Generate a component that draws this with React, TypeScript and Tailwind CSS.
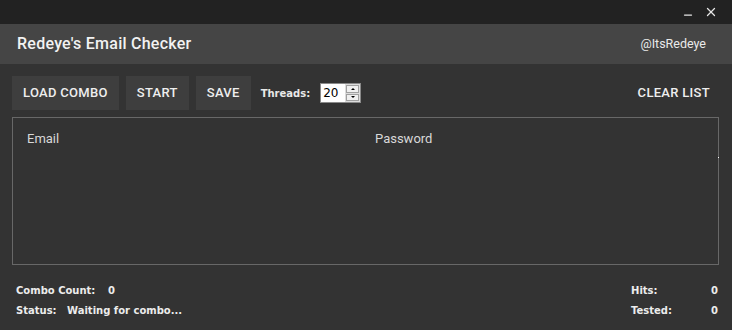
import { Minus, X } from 'lucide-react';

const roboto = { fontFamily: 'Roboto, "Liberation Sans", sans-serif' };
const tahoma = { fontFamily: '"DejaVu Sans", "Liberation Sans", sans-serif' };

function ToolButton({ label }: { label: string }) {
  return (
    <button className="h-[34px] px-[11px] bg-[#3e3e3e] text-[13px] font-medium tracking-[0.3px] text-[#eeeeee]">
      {label}
    </button>
  );
}

export default function App() {
  return (
    <div className="w-[732px] h-[330px] bg-[#333333] flex flex-col overflow-hidden" style={roboto}>
      <div className="h-[24px] bg-[#222222] flex items-center justify-end gap-[10px] pr-[14px] text-[#e6e6e6]">
        <Minus size={12} strokeWidth={2.5} className="mt-[6px]" />
        <X size={14} strokeWidth={2.2} />
      </div>

      <div className="h-[40px] bg-[#454545] flex items-center justify-between pl-[17px] pr-[26px]">
        <span className="text-[16px] font-medium tracking-[0.25px] text-[#f2f2f2]">Redeye's Email Checker</span>
        <span className="text-[12.5px] text-[#eaeaea]">@ItsRedeye</span>
      </div>

      <div className="flex-1 flex flex-col px-[12px] pt-[12px]">
        <div className="flex items-center h-[34px]">
          <div className="flex gap-[7px]">
            <ToolButton label="LOAD COMBO" />
            <ToolButton label="START" />
            <ToolButton label="SAVE" />
          </div>
          <span className="ml-[10px] text-[10px] font-bold text-[#e8e8e8]" style={tahoma}>Threads:</span>
          <div className="ml-[10px] flex items-center h-[20px] w-[41px] bg-white border border-[#8a8a8a]">
            <span className="flex-1 pl-[2px] text-[12px] text-black leading-none" style={tahoma}>20</span>
            <div className="w-[15px] h-full flex flex-col gap-[1px] bg-[#dcdcdc] p-[1px]">
              <div className="flex-1 bg-[#f0f0f0] border border-[#a0a0a0] flex items-center justify-center">
                <span className="block w-0 h-0 border-l-[2px] border-r-[2px] border-b-[2px] border-l-transparent border-r-transparent border-b-black" />
              </div>
              <div className="flex-1 bg-[#f0f0f0] border border-[#a0a0a0] flex items-center justify-center">
                <span className="block w-0 h-0 border-l-[2px] border-r-[2px] border-t-[2px] border-l-transparent border-r-transparent border-t-black" />
              </div>
            </div>
          </div>
          <button className="ml-auto mr-[10px] text-[13px] font-medium tracking-[0.3px] text-[#eeeeee]">CLEAR LIST</button>
        </div>

        <div className="relative mt-[7px] mr-[1px] h-[148px] border border-[#686868]">
          <div className="flex pt-[11px] text-[13px] text-[#d8d8d8]">
            <span className="w-[362px] pl-[14px]">Email</span>
            <span>Password</span>
          </div>
          <span className="absolute right-[-1px] top-[39px] w-[1px] h-[1px] bg-white" />
        </div>

        <div className="flex justify-between mt-[18px] pl-[4px] pr-[2px] text-[10px] font-bold text-[#ececec]" style={tahoma}>
          <div className="flex flex-col gap-[5px]">
            <div className="flex"><span className="w-[92px]">Combo Count:</span><span>0</span></div>
            <div className="flex"><span className="w-[51px]">Status:</span><span>Waiting for combo...</span></div>
          </div>
          <div className="flex flex-col gap-[5px]">
            <div className="flex"><span className="w-[80px]">Hits:</span><span>0</span></div>
            <div className="flex"><span className="w-[80px]">Tested:</span><span>0</span></div>
          </div>
        </div>
      </div>
    </div>
  );
}
